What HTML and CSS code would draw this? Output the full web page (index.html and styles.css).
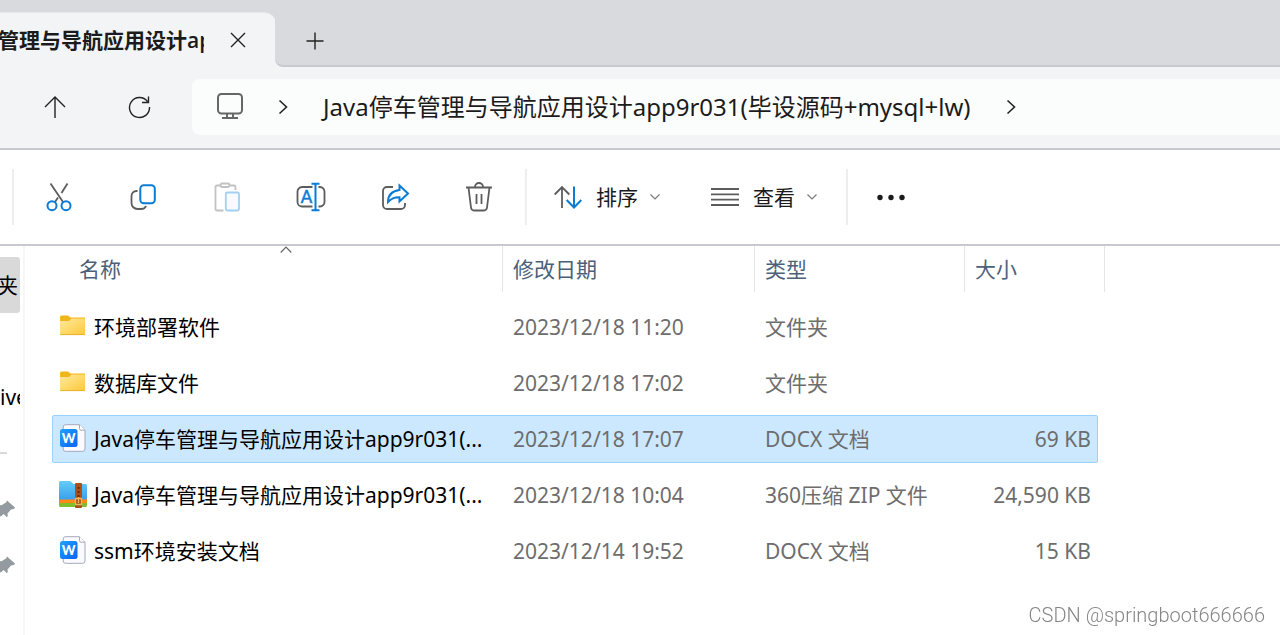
FILE: index.html
```html
<!DOCTYPE html>
<html lang="zh-CN">
<head>
  <meta charset="UTF-8">
  <title>文件资源管理器</title>
  <link rel="stylesheet" href="styles.css">
</head>
<body>

<!-- shared icons -->
<svg class="defs" width="0" height="0">
  <defs>
    <linearGradient id="folderFill" x1="0" y1="0" x2="1" y2="1">
      <stop offset="0" stop-color="#ffe9a0"/><stop offset="1" stop-color="#fdc936"/>
    </linearGradient>
    <linearGradient id="wFill" x1="0" y1="0" x2="1" y2="1">
      <stop offset="0" stop-color="#1ea4ff"/><stop offset="1" stop-color="#0a62f5"/>
    </linearGradient>
    <linearGradient id="zipFill" x1="0" y1="0" x2="0" y2="1">
      <stop offset="0" stop-color="#63cdf8"/><stop offset="1" stop-color="#3b9fec"/>
    </linearGradient>
    <symbol id="folder" viewBox="0 0 28 28">
      <path d="M1 5a1.500 1.500 0 0 1 1.500-1.500H9l2.500 2H26V12H1z" fill="#f3b51c"/>
      <path d="M1 9h9l2.500-2.500H26V22a1 1 0 0 1-1 1H2a1 1 0 0 1-1-1z" fill="url(#folderFill)"/>
      <path d="M1.500 22.600h24" stroke="#eab12a" stroke-width="1"/>
    </symbol>
    <symbol id="docx" viewBox="0 0 28 28">
      <path d="M6.500 .7H20l6 5.500V25a2.300 2.300 0 0 1-2.300 2.300H6.500A2.300 2.300 0 0 1 4.200 25V3A2.300 2.300 0 0 1 6.500 .7z" fill="#fbfbff" stroke="#a3a8bd"/>
      <path d="M20.500 .7v4a1.500 1.500 0 0 0 1.500 1.500h4" fill="#fff" stroke="#a3a8bd"/>
      <rect x="1" y="5" width="17.500" height="18" rx="2.500" fill="url(#wFill)"/>
      <text x="9.700" y="18.500" text-anchor="middle" class="w-mark">W</text>
    </symbol>
    <symbol id="zip" viewBox="0 0 28 28">
      <path d="M0 18h28v7.500a1.500 1.500 0 0 1-1.500 1.500h-25A1.500 1.500 0 0 1 0 25.500z" fill="#7fbf2e"/>
      <path d="M0 17h28v4.500a1.500 1.500 0 0 1-1.500 1.500h-25A1.500 1.500 0 0 1 0 21.500z" fill="#ff8a12"/>
      <path d="M0 2.500A1.500 1.500 0 0 1 1.500 1h9q1.500 0 2.500 1.500T15.500 4h11A1.500 1.500 0 0 1 28 5.500V18a1.500 1.500 0 0 1-1.500 1.500h-25A1.500 1.500 0 0 1 0 18z" fill="url(#zipFill)"/>
      <path d="M16 4a1 1 0 0 1 1-1h5a1 1 0 0 1 1 1v23a1 1 0 0 1-1 1h-5a1 1 0 0 1-1-1z" fill="#a9501b"/>
      <path d="M19.500 7v11" stroke="#6b2a08" stroke-width="2" stroke-dasharray="2 2"/>
      <path d="M16.500 18.500h6v6h-6zM19.500 17v6" fill="none" stroke="#f1b45a" stroke-width="1.300"/>
    </symbol>
    <symbol id="chevron" viewBox="0 0 12 12">
      <path d="M1.500 3.500 6 8l4.500-4.500" fill="none" stroke="#7a7a7a" stroke-width="1.200"/>
    </symbol>
    <symbol id="next" viewBox="0 0 16 16">
      <path d="M4.500 1.500 11.500 8l-7 6.500" fill="none" stroke="#222" stroke-width="1.600"/>
    </symbol>
    <symbol id="pin" viewBox="0 0 16 18">
      <path d="M7 .5 15 7.500l-1 1.500-3 .5-3.500 4 .3 2.800-1.300.7-2.800-3-3 2.500-1.200-.5V5l2 .3L6 2.500z" fill="#939ba1"/>
    </symbol>
  </defs>
</svg>

<div class="window">
  <header class="tabs">
    <div class="tab">
      <span class="tab-title">管理与导航应用设计ap</span>
      <button class="tab-close" aria-label="关闭标签页">
        <svg width="16" height="16"><path d="M1 1l14 14M15 1 1 15" class="thin"/></svg>
      </button>
    </div>
    <div class="tab-rest">
      <button class="tab-new" aria-label="新标签页">
        <svg width="18" height="18"><path d="M9 .5v17M.5 9h17" class="thin"/></svg>
      </button>
    </div>
  </header>

  <nav class="navbar">
    <button class="icon-button" aria-label="向上">
      <svg width="24" height="24"><path d="M12 23V2M2 12 12 2l10 10" class="thin"/></svg>
    </button>
    <button class="icon-button" aria-label="刷新">
      <svg width="24" height="24"><path d="M20.500 6.500A10 10 0 1 0 22.500 12M21.500 1.500v6h-6.500" class="thin"/></svg>
    </button>
    <div class="address">
      <svg class="monitor" width="28" height="28" fill="none" stroke="#666" stroke-width="2">
        <rect x="2" y="1" width="24" height="19.500" rx="3.500"/>
        <path d="M11 21v4M17 21v4M6 25h16"/>
      </svg>
      <svg class="next" width="16" height="16"><use href="#next"/></svg>
      <a class="crumb" href="#">Java停车管理与导航应用设计app9r031(毕设源码+mysql+lw)</a>
      <svg class="next" width="16" height="16"><use href="#next"/></svg>
    </div>
  </nav>

  <div class="toolbar">
    <span class="divider"></span>
    <button class="icon-button" aria-label="剪切">
      <svg width="32" height="32">
        <path d="M7.500 2.500 20 21M24.500 2.500 18.500 12M15 16.500l-3 4.500" class="gray"/>
        <circle cx="9" cy="24.700" r="4.500" class="blue"/><circle cx="23" cy="24.700" r="4.500" class="blue"/>
      </svg>
    </button>
    <button class="icon-button" aria-label="复制">
      <svg width="32" height="32">
        <path d="M10.500 10h-1A5 5 0 0 0 4.500 15v7a6 6 0 0 0 6 6H14q4 0 5-3" class="gray"/>
        <rect x="13.300" y="4.300" width="14.500" height="18" rx="3.500" class="blue"/>
      </svg>
    </button>
    <button class="icon-button" aria-label="粘贴" disabled>
      <svg width="32" height="32">
        <path d="M9.500 4.500H6A1.500 1.500 0 0 0 4.500 6v22A1.500 1.500 0 0 0 6 29.500h6.500M18.500 4.500H23A1.500 1.500 0 0 1 24.500 6v3" class="faded-gray"/>
        <rect x="9.500" y="2.500" width="9" height="3.500" rx="1.700" class="faded-gray"/>
        <rect x="14.800" y="11.500" width="13.200" height="18" rx="1.500" class="faded-blue"/>
      </svg>
    </button>
    <button class="icon-button" aria-label="重命名">
      <svg width="32" height="32">
        <path d="M17.500 6H7A4.500 4.500 0 0 0 2.500 10.500V21A4.500 4.500 0 0 0 7 25.500h10.500M23.500 6h1.500a4.500 4.500 0 0 1 4.500 4.500V21a4.500 4.500 0 0 1-4.500 4.500h-1.500" class="gray"/>
        <path d="M20.500 3v26M16.500 2.700h8M16.500 29.300h8" class="blue"/>
        <text x="11.500" y="21.500" text-anchor="middle" class="a-mark">A</text>
      </svg>
    </button>
    <button class="icon-button" aria-label="共享">
      <svg width="32" height="32">
        <path d="M14 6H8a4 4 0 0 0-4 4v14a4 4 0 0 0 4 4h14a4 4 0 0 0 4-4v-2" class="gray"/>
        <path d="M20.500 4.500 29 12.500l-8.500 8v-4.300Q13.500 16 9 21q0-10.500 11.500-12z" class="blue"/>
      </svg>
    </button>
    <button class="icon-button" aria-label="删除">
      <svg width="32" height="32">
        <path d="M3 6.500h26M12 6a4 4 0 0 1 8 0M5.500 6.500 8 26.500q.4 3 3 3h10q2.600 0 3-3l2.500-20M13.500 13v10M18.500 13v10" class="gray"/>
      </svg>
    </button>
    <span class="divider"></span>
    <button class="menu-button">
      <svg width="28" height="28">
        <path d="M8 25V4M.7 11.500 8 4l7.300 7.500" class="gray"/>
        <path d="M20 3.500V24M12.700 17 20 24.500l7.300-7.500" class="blue"/>
      </svg>
      <span class="menu-label">排序</span>
      <svg width="12" height="12"><use href="#chevron"/></svg>
    </button>
    <button class="menu-button">
      <svg width="28" height="28"><path d="M0 6h28M0 11.300h28M0 16.600h28M0 22h28" class="gray"/></svg>
      <span class="menu-label">查看</span>
      <svg width="12" height="12"><use href="#chevron"/></svg>
    </button>
    <span class="divider"></span>
    <button class="icon-button" aria-label="更多">
      <svg width="32" height="30" fill="#1b1b1b"><circle cx="4" cy="15.500" r="2.700"/><circle cx="15" cy="15.500" r="2.700"/><circle cx="26" cy="15.500" r="2.700"/></svg>
    </button>
  </div>

  <div class="content">
    <aside class="sidebar">
      <div class="side-item current">夹</div>
      <div class="side-item"></div>
      <div class="side-item">ive</div>
      <div class="side-item"><span class="side-line"></span></div>
      <div class="side-item"><svg width="16" height="18"><use href="#pin"/></svg></div>
      <div class="side-item"><svg width="16" height="18"><use href="#pin"/></svg></div>
    </aside>

    <main class="files">
      <table class="file-table">
        <thead>
          <tr>
            <th class="name-head">名称
              <svg class="sort-mark" width="12" height="8"><path d="M.7 6.500 6 1.200l5.300 5.300" fill="none" stroke="#666" stroke-width="1.200"/></svg>
            </th>
            <th>修改日期</th>
            <th>类型</th>
            <th>大小</th>
          </tr>
        </thead>
        <tbody>
          <tr>
            <td class="name"><svg width="28" height="28"><use href="#folder"/></svg>环境部署软件</td>
            <td>2023/12/18 11:20</td>
            <td>文件夹</td>
            <td class="size"></td>
          </tr>
          <tr>
            <td class="name"><svg width="28" height="28"><use href="#folder"/></svg>数据库文件</td>
            <td>2023/12/18 17:02</td>
            <td>文件夹</td>
            <td class="size"></td>
          </tr>
          <tr class="selected">
            <td class="name"><svg width="28" height="28"><use href="#docx"/></svg>Java停车管理与导航应用设计app9r031(...</td>
            <td>2023/12/18 17:07</td>
            <td>DOCX 文档</td>
            <td class="size">69 KB</td>
          </tr>
          <tr>
            <td class="name"><svg width="28" height="28"><use href="#zip"/></svg>Java停车管理与导航应用设计app9r031(...</td>
            <td>2023/12/18 10:04</td>
            <td>360压缩 ZIP 文件</td>
            <td class="size">24,590 KB</td>
          </tr>
          <tr>
            <td class="name"><svg width="28" height="28"><use href="#docx"/></svg>ssm环境安装文档</td>
            <td>2023/12/14 19:52</td>
            <td>DOCX 文档</td>
            <td class="size">15 KB</td>
          </tr>
        </tbody>
      </table>
    </main>
  </div>
</div>

<div class="watermark">CSDN @springboot666666</div>

</body>
</html>
```
FILE: styles.css
```css
* { box-sizing: border-box; }
body {
  margin: 0; background: #fff; color: #000; overflow: hidden;
  font-family: "Noto Sans", "Noto Sans CJK SC", sans-serif; font-size: 21px; line-height: 28px;
}
button {
  border: 0; padding: 0; background: none; color: inherit; font: inherit;
  display: flex; align-items: center; justify-content: center;
}
svg { display: block; flex: none; }
.defs { position: absolute; }
.window { display: flex; flex-direction: column; min-height: 100vh; }

/* tab strip */
.tabs { display: flex; height: 67px; background: linear-gradient(#d9dade 50%, #f3f4f6 50%); }
.tab {
  display: flex; align-items: center; width: 276px; margin-top: 12px; padding-bottom: 1px;
  background: #f3f4f6; border-top: 1px solid #e6e7ea; border-radius: 0 12px 0 0;
}
.tab-title {
  width: 204px; overflow: hidden; white-space: nowrap; text-indent: -2px;
  font-family: "Open Sans", "Noto Sans CJK SC", sans-serif; font-weight: 600; color: #1b1b1b;
}
.tab-close { width: 44px; height: 44px; margin-left: 12px; }
.tab-rest {
  flex: 1; display: flex; align-items: center; margin-left: -1px; padding-top: 16px;
  background: #d9dade; border-bottom: 2px solid #c8c9d0; border-bottom-left-radius: 8px;
}
.tab-new { width: 44px; height: 44px; margin-left: 18px; }
.thin { fill: none; stroke: #222; stroke-width: 1.4; }

/* address row */
.navbar {
  display: flex; align-items: center; padding: 12px 0 13px 13px;
  background: #f3f4f6; border-bottom: 2px solid #c8c9d0;
}
.icon-button { width: 84px; height: 56px; }
.address {
  flex: 1; display: flex; align-items: center; height: 56px; margin-left: 11px; padding-left: 24px;
  background: #fbfdfc; border-radius: 8px 0 0 8px;
}
.monitor { margin-right: 31px; }
.crumb {
  margin: 0 32px; color: #1b1b1b; font-size: 24px; line-height: 32px;
  text-decoration: none; white-space: nowrap;
}

/* commands */
.toolbar {
  display: flex; align-items: center; padding: 19px 0 19px 8px;
  border-bottom: 2px solid #c8c9d0;
}
.divider { width: 2px; height: 56px; margin: 0 3px 0 4px; background: #eee; }
.menu-button { height: 56px; padding: 0 26px 0 24px; }
.menu-button + .divider { margin: 0 2px; }
.menu-label { margin: 0 11px 0 14px; color: #1b1b1b; }
.gray { fill: none; stroke: #5c5c5c; stroke-width: 1.8; }
.blue { fill: none; stroke: #0a7cd6; stroke-width: 2; }
.faded-gray { fill: none; stroke: #c2c2c2; stroke-width: 1.8; }
.faded-blue { fill: #f7fbff; stroke: #a2d0f3; stroke-width: 1.8; }
.a-mark { font-family: Lato, sans-serif; font-size: 17px; fill: #0a7cd6; stroke: #0a7cd6; stroke-width: .5px; }
.w-mark { font-family: Lato, sans-serif; font-size: 13px; font-weight: 900; fill: #fff; }

/* body */
.content { flex: 1; display: flex; }
.sidebar { width: 25px; padding-top: 11px; border-right: 2px solid #f6f6f7; }
.side-item {
  display: flex; align-items: center; width: 20px; height: 56px;
  overflow: hidden; border-radius: 0 3px 3px 0;
}
.side-item.current { justify-content: flex-end; padding-right: 2px; background: #d9d9d9; }
.side-line { width: 7px; height: 2px; background: #d9d9d9; }
.files { flex: 1; padding-left: 27px; }

.file-table { display: block; }
.file-table thead, .file-table tbody { display: block; }
.file-table tr { display: grid; grid-template-columns: 450px 252px 210px 140px; }
.file-table thead { padding: 0 0 11px 1px; }
.file-table th {
  padding: 9px 0 9px 10px; border-right: 1px solid #e5e5e5;
  color: #4c607a; font-weight: normal; text-align: left;
}
.file-table .name-head { position: relative; padding-left: 26px; }
.sort-mark { position: absolute; top: 0; left: 227px; }
.file-table tbody tr {
  grid-template-columns: 450px 252px 210px 132px; align-items: center;
  width: 1046px; height: 48px; margin-bottom: 8px;
  border: 1px solid transparent; border-radius: 2px;
}
.file-table tbody .selected { background: #cce8ff; border-color: #99d1ff; }
.file-table td { padding: 0 0 0 10px; color: #6d6d6d; white-space: nowrap; }
.file-table .name { display: flex; align-items: center; gap: 7px; padding-left: 6px; color: #000; }
.file-table .name svg { margin-bottom: 2px; }
.file-table .size { padding: 0 6px 0 0; text-align: right; }

.watermark {
  position: fixed; right: 15px; bottom: 6px;
  color: #858585; font-family: Roboto, sans-serif; font-size: 20px; font-weight: 300;
}
```
